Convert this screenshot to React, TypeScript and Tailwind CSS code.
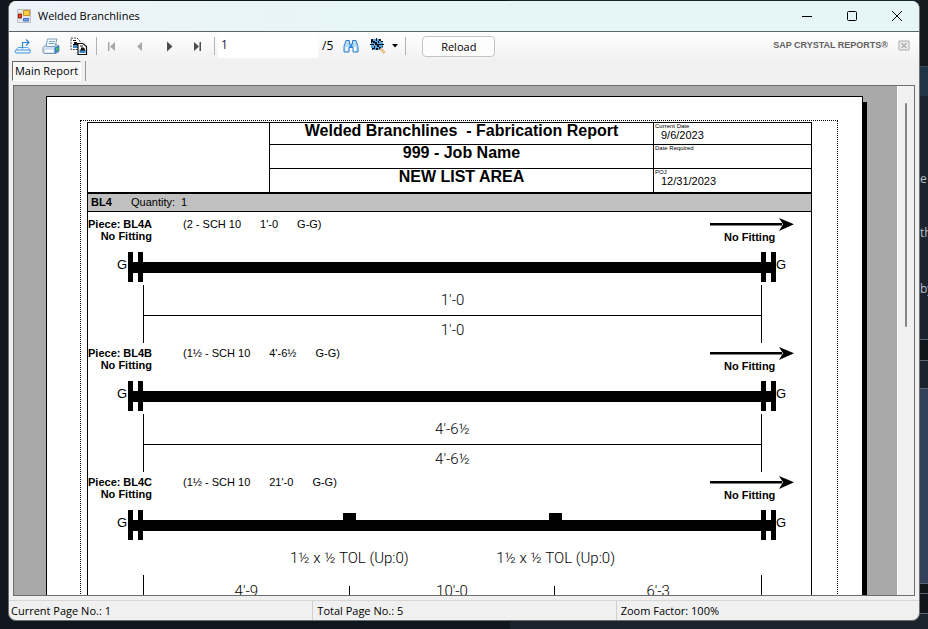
import type { ReactNode } from "react";

function Divider({ className }: { className: string }) {
  return <span className={`h-[18px] w-px bg-[#b4b4b4] ${className}`} />;
}

function Toolbar() {
  return (
    <div className="flex h-[29px] items-center bg-linear-to-b from-white to-[#f1f1f1] pr-[9px] pb-px pl-[5px]">
      <button aria-label="Export report" className="h-5 w-[18px]">
        <svg viewBox="0 0 18 20" className="h-5 w-[18px]" fill="none">
          <path d="M1.5 14.5 4 11.500h10l2.500 3" stroke="#5ba7e6" fill="#f3f9ff" />
          <rect x="1" y="14" width="15.500" height="3" rx="1.500" stroke="#3c93dc" fill="#eaf5ff" />
          <path d="M8.500 12.500V6.500H14" stroke="#2f83cf" strokeWidth="1.200" />
          <path d="M12 3.500 15 6.500 12 9.500" stroke="#2f83cf" strokeWidth="1.200" />
        </svg>
      </button>
      <button aria-label="Print report" className="ml-2.5 h-5 w-[18px]">
        <svg viewBox="0 0 18 20" className="h-5 w-[18px]">
          <path d="M1 11.500 4 8.500h11l2 2v5l-3 2H2l-1-1.500z" fill="#cfe3f2" stroke="#7d9ab4" />
          <path d="M5.500 3h9.500l-2 7.500H4z" fill="#f1f8fd" stroke="#7fa3bf" />
          <path d="M7 5.500h6M6.500 7.500h6" stroke="#86a9c2" />
          <path d="M12.500 11.500 17 9v6l-4.500 2.500z" fill="#3a78b8" />
          <path d="M3 14h8v2H3z" fill="#fff" />
          <rect x="14" y="11.500" width="2.500" height="3" fill="#35c06a" />
        </svg>
      </button>
      <button aria-label="Copy" className="ml-2.5 h-5 w-[18px]">
        <svg viewBox="0 0 18 20" className="h-5 w-[18px]">
          <path d="M1 2h6l3 3v8.500H1z" fill="#fff" stroke="#444" strokeDasharray="2 1" />
          <path d="M3 9h6v3H3z" fill="#3d86c4" />
          <path d="M3 4h3v1H3zM4 6h3v1h1v2H3V8h1z" fill="#111" />
          <path d="M8 7.500h5l3.500 3v8H8z" fill="#fff" stroke="#111" strokeWidth="1.200" />
          <path d="M9.500 14h6v3h-6z" fill="#3d86c4" />
          <path d="M10 9.500h3v1h-3zM11 11.500h3v1h1v2h-5v-1h1z" fill="#111" />
        </svg>
      </button>
      <Divider className="ml-2" />
      <button aria-label="First page" className="ml-[11px] h-5 w-2">
        <svg viewBox="0 0 8 20" className="h-5 w-2" fill="#a8a8a8"><path d="M0 6h1.500v9H0zM7 6v9L2 10.500z" /></svg>
      </button>
      <button aria-label="Previous page" className="ml-5 h-5 w-2">
        <svg viewBox="0 0 8 20" className="h-5 w-2" fill="#a8a8a8"><path d="M6 6v9L1 10.500z" /></svg>
      </button>
      <button aria-label="Next page" className="ml-[22px] h-5 w-2">
        <svg viewBox="0 0 8 20" className="h-5 w-2" fill="#4d4d4d"><path d="M1 5.500v10L6.500 10.500z" /></svg>
      </button>
      <button aria-label="Last page" className="ml-5 h-5 w-2">
        <svg viewBox="0 0 8 20" className="h-5 w-2" fill="#4d4d4d"><path d="M0 6v9l5-4.500zM5.500 6H7v9H5.500z" /></svg>
      </button>
      <Divider className="ml-3" />
      <input
        aria-label="Page number"
        defaultValue="1"
        className="ml-[3px] h-[23px] w-[100px] bg-white px-[3px] pb-1 text-xs text-[#301040] outline-none"
      />
      <span className="ml-1 text-xs">/5</span>
      <button aria-label="Find text" className="ml-2.5 h-5 w-4">
        <svg viewBox="0 0 16 20" className="h-5 w-4">
          <path d="M3 4.500h3.500V8h3V4.500H13l2 6V16h-5v-4.500H6V16H1v-5.500z" fill="#b9dcf5" stroke="#2f7fd0" />
          <path d="M2.500 11h2v4h-2zM11 11h2v4h-2z" fill="#fff" />
          <path d="M6.500 8.500h3v3h-3z" fill="#2b8be0" />
        </svg>
      </button>
      <button aria-label="Zoom" className="ml-[11px] flex h-5 w-7 items-center justify-between">
        <svg viewBox="0 0 16 20" className="h-5 w-4">
          <path d="M2 3h9v2h2v7h-2v2H3v-2H1V5h1z" fill="#5aa5dd" />
          <path d="M1 3h2v2h2v2H3V6H1zM6 2h1v3H6zM9 3h2v2H9zM11 5h2v1h-2zM0 8h4v1H0zM9 8h5v1H9zM5 6h2v2h2v3H7V9H5zM2 12h2v-2h1v3H3v1H2zM6 12h2v2H6zM9 11h2v2h2v1h-2v-1H9zM8 5h1v2H8zM12 10h1v1h-1zM1 5h1v2H1z" fill="#0c1420" />
          <path d="m10.500 12.500 4 4.500" stroke="#d99a5c" strokeWidth="2.600" />
          <path d="m10.500 12.500 4 4.500" stroke="#ffe6c4" strokeWidth="1.100" />
        </svg>
        <svg viewBox="0 0 6 4" className="h-1 w-1.5"><path d="M0 0h6L3 3.500z" /></svg>
      </button>
      <Divider className="ml-[7px]" />
      <button className="ml-4 h-[21px] w-[73px] rounded-[4px] border border-[#c4c4c4] bg-[#fdfdfd] text-[11px] leading-[19px]">Reload</button>
      <span className="ml-auto font-['Liberation_Sans',Arial,sans-serif] text-[9px] font-bold text-[#606060]">SAP CRYSTAL REPORTS®</span>
      <button aria-label="Close report" className="ml-2.5 h-3 w-3">
        <svg viewBox="0 0 12 12" className="h-3 w-3" fill="none" stroke="#aaa">
          <path d="M1 1h10v9H1z" fill="#eee" />
          <path d="m3.500 3 5 5M8.500 3l-5 5" strokeWidth="1.300" />
        </svg>
      </button>
    </div>
  );
}

function TitleBar() {
  return (
    <header className="flex h-[30px] items-center bg-linear-to-r from-[#eef3f9] to-[#e6f6f6] to-40% pr-[17px] pl-2">
      <svg viewBox="0 0 14 14" className="size-3.5">
        <path d="M.5 .5h13v13H.5z" fill="#e4e6ea" stroke="#b9bdc4" />
        <path d="M6.500 1.500h6v5h-6z" fill="#f9cf4a" stroke="#c8901c" />
        <path d="M1.500 5h3v4h-3z" fill="#e0492f" stroke="#a01c10" />
        <path d="M6.500 9.500h5v2.500h-5z" fill="#74a6f2" stroke="#3d70c4" />
      </svg>
      <h1 className="ml-[7px] text-[11px]">Welded Branchlines</h1>
      <div className="ml-auto flex gap-[35px]">
        <button aria-label="Minimize"><svg viewBox="0 0 10 10" className="size-2.5" stroke="#000"><path d="M0 5.500h10" /></svg></button>
        <button aria-label="Maximize"><svg viewBox="0 0 10 10" className="size-2.5" fill="none" stroke="#000"><rect x=".5" y=".5" width="9" height="9" rx="1" /></svg></button>
        <button aria-label="Close"><svg viewBox="0 0 10 10" className="size-2.5" stroke="#000"><path d="m0 0 10 10M10 0 0 10" /></svg></button>
      </div>
    </header>
  );
}

function DateCell({ label, value }: { label: string; value?: string }) {
  return (
    <div className="border-b border-black pl-px last:border-b-0">
      <div className="text-[6px] leading-[6px]">{label}</div>
      <div className="pl-1.5 text-[11px] leading-3">{value}</div>
    </div>
  );
}

function ReportHeader() {
  const rows = "grid-rows-[22px_24px_23px]";
  return (
    <div className="flex">
      <div className="w-[182px] border-r border-black" />
      <div className={`grid min-w-0 flex-1 ${rows} text-center text-base leading-4 font-bold whitespace-pre`}>
        <h2 className="border-b border-black">{"Welded Branchlines  - Fabrication Report"}</h2>
        <div className="border-b border-black">999 - Job Name</div>
        <div>NEW LIST AREA</div>
      </div>
      <div className={`grid w-[158px] ${rows} border-l border-black`}>
        <DateCell label="Current Date" value="9/6/2023" />
        <DateCell label="Date Required" />
        <DateCell label="POJ" value="12/31/2023" />
      </div>
    </div>
  );
}

function Flange() {
  return (
    <div className="flex h-full justify-between">
      <div className="w-[5px] bg-black" />
      <div className="h-[11px] w-[5px] self-center bg-black" />
      <div className="w-[5px] bg-black" />
    </div>
  );
}

function Pipe({ outlets = 0 }: { outlets?: number }) {
  return (
    <div className="flex h-[30px]">
      <div className="w-[40px] pt-[5px] pr-px text-right text-[13px] leading-4">G</div>
      <Flange />
      <div className="flex-1 pt-[3px]">
        <div className="flex h-[7px] justify-center">
          {Array.from({ length: outlets }, (_, i) => (
            <div key={i} className="flex w-1/3 justify-center">
              <div className="w-[13px] bg-black" />
            </div>
          ))}
        </div>
        <div className="h-[11px] bg-black" />
      </div>
      <Flange />
      <div className="w-[35px] pt-[5px] text-[13px] leading-4">G</div>
    </div>
  );
}

function Piece({ name, spec, outlets, children }: { name: string; spec: string[]; outlets?: number; children: ReactNode }) {
  return (
    <section className="h-[129px]">
      <div className="flex h-9 pt-0.5 text-[11px] leading-3">
        <div className="w-16 text-right font-bold whitespace-nowrap">
          <div className="flex justify-between">
            <span>Piece:</span>
            <span>{name}</span>
          </div>
          No Fitting
        </div>
        <div className="ml-[31px] flex gap-[19px]">
          {spec.map((s) => <span key={s}>{s}</span>)}
        </div>
        <div className="mr-[17px] ml-auto w-[84px]">
          <svg viewBox="0 0 84 13" className="h-[13px] w-[84px]">
            <path d="M0 5h72v2.500H0z" />
            <path d="M69 0 84 6.200 69 13l4-6.800z" />
          </svg>
          <div className="pl-[14px] font-bold">No Fitting</div>
        </div>
      </div>
      <Pipe outlets={outlets} />
      {children}
    </section>
  );
}

function SingleDimension({ value }: { value: string }) {
  return (
    <div className="mt-[3px] mr-[49px] ml-[55px] h-[58px] border-x border-black text-center font-[Roboto,sans-serif] text-[15px] leading-[30px] font-light">
      <div className="border-b border-black">{value}</div>
      <div className="leading-7">{value}</div>
    </div>
  );
}

function OutletDimensions({ labels, lengths }: { labels: string[]; lengths: string[] }) {
  return (
    <div className="mr-[49px] ml-[55px] text-center font-[Roboto,sans-serif] text-[15px] font-light whitespace-nowrap">
      <div className="flex justify-center pt-2.5 leading-4">
        {labels.map((l, i) => <div key={i} className="w-1/3">{l}</div>)}
      </div>
      <div className="mt-[9px] flex h-14 items-stretch border-x border-black">
        {lengths.map((l) => (
          <div key={l} className="group flex flex-1">
            <div className="flex-1 pt-2 leading-4">{l}</div>
            <div className="mt-[11px] w-px bg-black group-last:hidden" />
          </div>
        ))}
      </div>
    </div>
  );
}

function ReportPage() {
  return (
    <article className="mr-[34px] ml-8 h-[1056px] border border-black bg-white pt-[23px] pr-6 pl-[33px] font-['Liberation_Sans',Arial,sans-serif] text-black shadow-[4px_6px_0_#000]">
      <div className="h-[1000px] border border-dotted border-black pt-px pr-[25px] pl-1.5">
        <div className="h-[990px] border border-black">
          <ReportHeader />
          <div className="-mx-px flex h-5 border border-t-2 border-black bg-[#c0c0c0] pl-[3px] text-[11px] leading-[17px]">
            <strong className="w-10">BL4</strong>
            <span>Quantity:</span>
            <span className="ml-1.5">1</span>
          </div>
          <div className="pt-1">
            <Piece name="BL4A" spec={["(2 - SCH 10", "1'-0", "G-G)"]}><SingleDimension value="1'-0" /></Piece>
            <Piece name="BL4B" spec={["(1½ - SCH 10", "4'-6½", "G-G)"]}><SingleDimension value="4'-6½" /></Piece>
            <Piece name="BL4C" spec={["(1½ - SCH 10", "21'-0", "G-G)"]} outlets={2}>
              <OutletDimensions labels={["1½ x ½ TOL (Up:0)", "1½ x ½ TOL (Up:0)"]} lengths={["4'-9", "10'-0", "6'-3"]} />
            </Piece>
          </div>
        </div>
      </div>
    </article>
  );
}

function BackgroundWindow() {
  return (
    <aside className="flex w-2 shrink-0 flex-col overflow-hidden bg-[#1b232e] text-xs leading-4 text-[#b8bdc4]">
      <div className="h-[67px] shrink-0 border-b border-[#3c4650] bg-[#14191f]" />
      <div className="h-[29px] shrink-0 bg-[#1f3446]" />
      <div className="mt-[75px]">e</div>
      <div className="mt-[38px]">th</div>
      <div className="mt-10">by</div>
      <div className="mt-[42px] h-[22px] shrink-0 border-y border-[#5b6675] bg-[#10151c]" />
      <div className="mt-[27px] h-[196px] shrink-0 border-y border-[#5b6675] bg-[#33415a]" />
      <div className="h-2.5 shrink-0 border-b border-[#5b6675] bg-[#10151c]" />
      <div className="h-5 shrink-0 border-b border-[#5b6675] bg-[#10151c]" />
    </aside>
  );
}

export default function App() {
  return (
    <div className="flex h-screen overflow-hidden bg-linear-to-r from-[#10161e] from-55% to-[#1a222c] to-55% pl-2 font-['Open_Sans','Noto_Sans',sans-serif] text-black">
      <main className="mt-px mb-2 flex min-w-0 flex-1 flex-col overflow-hidden rounded-lg border border-t-0 border-[#6b6f70] bg-[#f0f0f0]">
        <TitleBar />
        <div className="h-px shrink-0 bg-[#5f6667]" />
        <Toolbar />
        <div className="flex h-6 shrink-0 pl-[3px]">
          <button className="h-5 w-[69px] border border-r-white border-b-white border-l-[#666] border-t-[#666] bg-[#f8f8f8] text-[11px] leading-[18px]">Main Report</button>
          <span className="ml-1 h-5 w-px bg-[#999]" />
        </div>
        <div className="mr-1 ml-1 flex min-h-0 flex-1 border border-[#6b6f6f] bg-[#a9a9a9]">
          <div className="min-w-0 flex-1 overflow-hidden pt-2.5">
            <ReportPage />
          </div>
          <div className="flex w-[17px] justify-center border-l border-white bg-[#f0f0f0] pt-[17px]">
            <div className="h-56 w-0.5 rounded bg-[#868686]" />
          </div>
        </div>
        <footer className="mt-1 grid h-5 shrink-0 grid-cols-3 border-t border-[#d7d7d7] text-[11px] leading-5">
          <span className="pl-0.5">Current Page No.: 1</span>
          <span className="border-l border-[#d0d0d0] pl-1">Total Page No.: 5</span>
          <span className="border-l border-[#d0d0d0] pl-1">Zoom Factor: 100%</span>
        </footer>
      </main>
      <BackgroundWindow />
    </div>
  );
}
